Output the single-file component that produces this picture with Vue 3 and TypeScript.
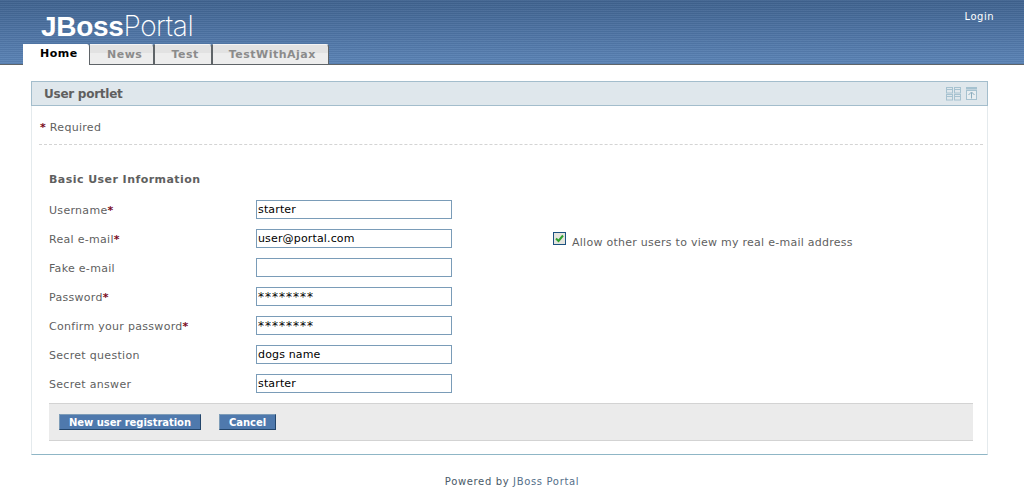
<script setup lang="ts">
interface Row { label: string; required: boolean; value: string; secret?: boolean }
const rows: Row[] = [
  { label: 'Username', required: true, value: 'starter' },
  { label: 'Real e-mail', required: true, value: 'user@portal.com' },
  { label: 'Fake e-mail', required: false, value: '' },
  { label: 'Password', required: true, value: '********', secret: true },
  { label: 'Confirm your password', required: true, value: '********', secret: true },
  { label: 'Secret question', required: false, value: 'dogs name' },
  { label: 'Secret answer', required: false, value: 'starter' },
]
const tabs = ['News', 'Test', 'TestWithAjax']
</script>

<template>
  <div class="page">
    <header class="header">
      <div class="top">
        <div class="logo"><b>JBoss</b><span>Portal</span></div>
        <a class="login">Login</a>
      </div>
      <nav class="tabs">
        <div class="tab active">Home</div>
        <div v-for="t in tabs" :key="t" class="tab">{{ t }}</div>
      </nav>
    </header>

    <section class="portlet">
      <div class="title">
        <span>User portlet</span>
        <div class="icons">
          <svg width="15" height="14" viewBox="0 0 15 14" fill="none" stroke="#a6c2d0">
            <rect x="0.5" y="0.5" width="6" height="5.5" /><line x1="1" y1="2.5" x2="6" y2="2.5" />
            <rect x="8.5" y="0.5" width="6" height="5.5" /><line x1="9" y1="2.5" x2="14" y2="2.5" />
            <rect x="0.5" y="7.5" width="6" height="5.5" /><line x1="1" y1="9.5" x2="6" y2="9.5" />
            <rect x="8.5" y="7.5" width="6" height="5.5" /><line x1="9" y1="9.5" x2="14" y2="9.5" />
          </svg>
          <svg width="11" height="13" viewBox="0 0 11 13" fill="none" stroke="#a6c2d0">
            <rect x="0.5" y="0.5" width="10" height="1.5" fill="#a6c2d0" />
            <rect x="0.5" y="3.5" width="10" height="9" fill="#e8eef1" />
            <path d="M5.5 11.5V5.5M2.5 8l3-3 3 3" stroke="#8aacbd" />
          </svg>
        </div>
      </div>
      <div class="body">
        <p class="required"><i>*</i> Required</p>
        <h3>Basic User Information</h3>
        <div class="form">
          <div v-for="(r, i) in rows" :key="r.label" class="row">
            <label>{{ r.label }}<i v-if="r.required">*</i></label>
            <input class="field" :class="{ secret: r.secret }" type="text" :value="r.value" />
            <div v-if="i === 1" class="check">
              <span class="box">
                <svg width="9" height="9" viewBox="0 0 9 9"><path d="M1 4.5l2.5 2.5L8 1.5" fill="none" stroke="#2fa02f" stroke-width="2" /></svg>
              </span>
              <span>Allow other users to view my real e-mail address</span>
            </div>
          </div>
        </div>
        <div class="actions">
          <button class="btn" type="button">New user registration</button>
          <button class="btn" type="button">Cancel</button>
        </div>
      </div>
    </section>

    <footer class="footer">Powered by <span>JBoss Portal</span></footer>
  </div>
</template>

<style>
html, body { margin: 0; background: #fff; }
</style>

<style scoped>
.page {
  width: 1024px;
  height: 496px;
  overflow: hidden;
  font-family: "DejaVu Sans", Verdana, sans-serif;
  font-size: 11px;
  letter-spacing: 0.3px;
  color: #5f5f5f;
}
.header {
  height: 64px;
  border-bottom: 1px solid #5f6468;
  background:
    repeating-linear-gradient(to bottom, rgba(255,255,255,0.05) 0 1px, rgba(0,0,0,0.04) 1px 2px),
    linear-gradient(to bottom, #3f628f, #5a83b6);
  display: flex;
  flex-direction: column;
  justify-content: space-between;
}
.top {
  display: flex;
  justify-content: space-between;
  padding: 0 30px 0 41px;
  height: 44px;
}
.logo {
  font-family: "Liberation Sans", Arial, sans-serif;
  font-size: 28px;
  line-height: 26px;
  margin-top: 13px;
  color: #fff;
  letter-spacing: -0.3px;
}
.logo span { font-family: Inter, "Liberation Sans", sans-serif; font-weight: 200; font-size: 28px; letter-spacing: -0.5px; }
.login { color: #fff; font-size: 10px; margin-top: 11px; letter-spacing: 0.5px; }
.tabs {
  display: flex;
  height: 20px;
  padding-left: 23px;
  align-items: flex-end;
  font-size: 11px;
  font-weight: bold;
}
.tab {
  box-sizing: border-box;
  height: 20px;
  padding: 0 12px 0 16px;
  line-height: 19px;
  color: #8b8b8b;
  background: linear-gradient(to bottom, #e2e2e2 0 8px, #ededed 8px);
  border-top: 1px solid #f4f4f4;
  border-right: 1px solid #5f6468;
  border-left: 1px solid #5f6468;
  border-top-right-radius: 3px;
  letter-spacing: 0.5px;
}
.tab.active {
  width: 67px;
  height: 21px;
  margin-bottom: -1px;
  padding: 0 0 0 17px;
  background: #fff;
  color: #000;
  border: 0;
  border-right: 1px solid #5f6468;
  line-height: 20px;
}
.tab.active + .tab { border-left: 0; padding: 0 11px 0 17px; }
.portlet {
  box-sizing: border-box;
  width: 957px;
  height: 374px;
  margin: 16px 0 0 31px;
  border-left: 1px solid #e4eaed;
  border-right: 1px solid #e4eaed;
  border-bottom: 1px solid #8fb6c6;
}
.title {
  box-sizing: border-box;
  height: 25px;
  margin: 0 -1px 0 -1px;
  padding: 0 10px 0 12px;
  display: flex;
  align-items: center;
  justify-content: space-between;
  background: #dfe7ec;
  border: 1px solid #a3bdcc;
  font-size: 12px;
  font-weight: bold;
  letter-spacing: -0.25px;
  color: #5f5f5f;
}
.icons { display: flex; gap: 5px; align-items: center; }
.body { padding: 0 14px 0 7px; }
.required {
  margin: 0 -10px 0 0;
  padding: 15px 0 9px 0;
  height: 14px;
  line-height: 14px;
  border-bottom: 1px dashed #d4d4d4;
}
.required i { margin-left: 1px; }
i { font-style: normal; color: #7a0a1a; font-weight: bold; }
h3 {
  margin: 28px 0 0 10px;
  font-size: 11px;
  line-height: 14px;
  letter-spacing: 0.45px;
  color: #5f5f5f;
}
.form { margin: 9px 0 0 10px; }
.row {
  display: flex;
  align-items: center;
  height: 29px;
}
.row label { width: 207px; }
.field {
  box-sizing: border-box;
  width: 196px;
  height: 19px;
  margin-top: -2px;
  padding: 0 1px;
  border: 1px solid #7a9cb8;
  font-family: "DejaVu Sans", Verdana, sans-serif;
  font-size: 11px;
  letter-spacing: 0.15px;
  color: #000;
  background: #fff;
  outline: none;
}
.field.secret { font-size: 12px; letter-spacing: 1px; }
.check {
  display: flex;
  align-items: center;
  gap: 6px;
  margin-left: 101px;
  position: relative;
  top: 3px;
  letter-spacing: 0.26px;
}
.box {
  box-sizing: border-box;
  width: 13px;
  height: 13px;
  border: 1px solid #1c5180;
  background: #e4e4de;
  display: flex;
  align-items: center;
  justify-content: center;
  margin-top: -9px;
}
.actions {
  margin: 4px 0 0 10px;
  height: 36px;
  background: #ebebeb;
  border-top: 1px solid #d3d3d3;
  border-bottom: 1px solid #d3d3d3;
  display: flex;
  align-items: center;
  gap: 18px;
  padding-left: 10px;
}
.btn {
  height: 16px;
  padding: 1px 9px 0;
  background: #4f79ad;
  color: #fff;
  font-family: "DejaVu Sans", Verdana, sans-serif;
  font-size: 10px;
  font-weight: bold;
  letter-spacing: -0.05px;
  border: 1px solid;
  border-color: #7d9cb8 #23456b #23456b #7d9cb8;
  line-height: 14px;
}
.footer {
  margin-top: 21px;
  text-align: center;
  font-size: 10px;
  color: #4a5a68;
  letter-spacing: 0.65px;
}
.footer span { color: #55708a; }
</style>
